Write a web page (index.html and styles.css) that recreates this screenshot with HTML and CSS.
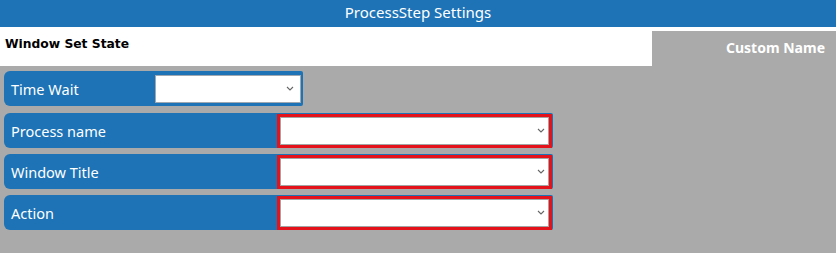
FILE: index.html
```html
<!DOCTYPE html>
<html lang="en">
<head>
<meta charset="utf-8"/>
<title>ProcessStep Settings</title>
<link rel="stylesheet" href="styles.css">
</head>
<body>
<div class="header">ProcessStep Settings</div>
<div class="top-bar">
  <div class="step-name">Window Set State</div>
  <div class="custom-name">Custom Name</div>
</div>

<div class="rows">
  <div class="row row-short">
    <label>Time Wait</label>
    <div class="select-wrap">
      <select id="slTimeWait"></select>
      <svg class="chevron" width="8" height="5" viewBox="0 0 8 5"><path d="M1 1 L4 4 L7 1" fill="none" stroke="#666" stroke-width="1.1"/></svg>
    </div>
  </div>

  <div class="row">
    <label>Process name</label>
    <div class="select-wrap required">
      <select id="slProcessName"></select>
      <svg class="chevron" width="8" height="5" viewBox="0 0 8 5"><path d="M1 1 L4 4 L7 1" fill="none" stroke="#666" stroke-width="1.1"/></svg>
    </div>
  </div>

  <div class="row">
    <label>Window Title</label>
    <div class="select-wrap required">
      <select id="slWindowTitle"></select>
      <svg class="chevron" width="8" height="5" viewBox="0 0 8 5"><path d="M1 1 L4 4 L7 1" fill="none" stroke="#666" stroke-width="1.1"/></svg>
    </div>
  </div>

  <div class="row">
    <label>Action</label>
    <div class="select-wrap required">
      <select id="slAction"></select>
      <svg class="chevron" width="8" height="5" viewBox="0 0 8 5"><path d="M1 1 L4 4 L7 1" fill="none" stroke="#666" stroke-width="1.1"/></svg>
    </div>
  </div>
</div>
</body>
</html>
```

FILE: styles.css
```css
body { margin: 0; padding: 0; background: #aaaaaa; font-family: "Noto Sans", "Open Sans", sans-serif; }
.header { background: #1d73b5; color: white; height: 27px; line-height: 25px; text-align: center; font-size: 15px; }
.top-bar { display: flex; height: 39px; background: white; }
.step-name { flex: 1; padding-left: 5px; padding-top: 10px; font-family: "DejaVu Sans", Verdana, sans-serif; font-weight: bold; font-size: 12.3px; color: black; }
.custom-name { width: 173px; margin-top: 4px; padding-right: 11px; background: #aaaaaa; color: white; font-weight: bold; font-size: 14px; text-align: right; line-height: 34px; }
.rows { padding: 5px 0 0 4px; }
.row { display: flex; align-items: center; justify-content: space-between; width: 549px; height: 35px; margin-bottom: 6px; background: #1d73b5; border-radius: 6px 2px 2px 6px; box-sizing: border-box; padding-right: 1px; }
.row-short { width: 299px; margin-bottom: 7px; padding-right: 2px; }
.row label { color: white; font-size: 14.5px; padding-left: 7px; }
.select-wrap { position: relative; width: 146px; height: 28px; }
.required { width: 275px; height: 34px; }
.select-wrap select { width: 100%; height: 100%; box-sizing: border-box; appearance: none; -webkit-appearance: none; background: white; border: 1px solid #9fa8b0; border-radius: 0; margin: 0; outline: none; }
.required select { border: 3px solid #e4121a; box-shadow: inset 0 0 0 1px #a4a4a4; }
.chevron { position: absolute; right: 7px; top: 50%; margin-top: -3px; pointer-events: none; }
```
